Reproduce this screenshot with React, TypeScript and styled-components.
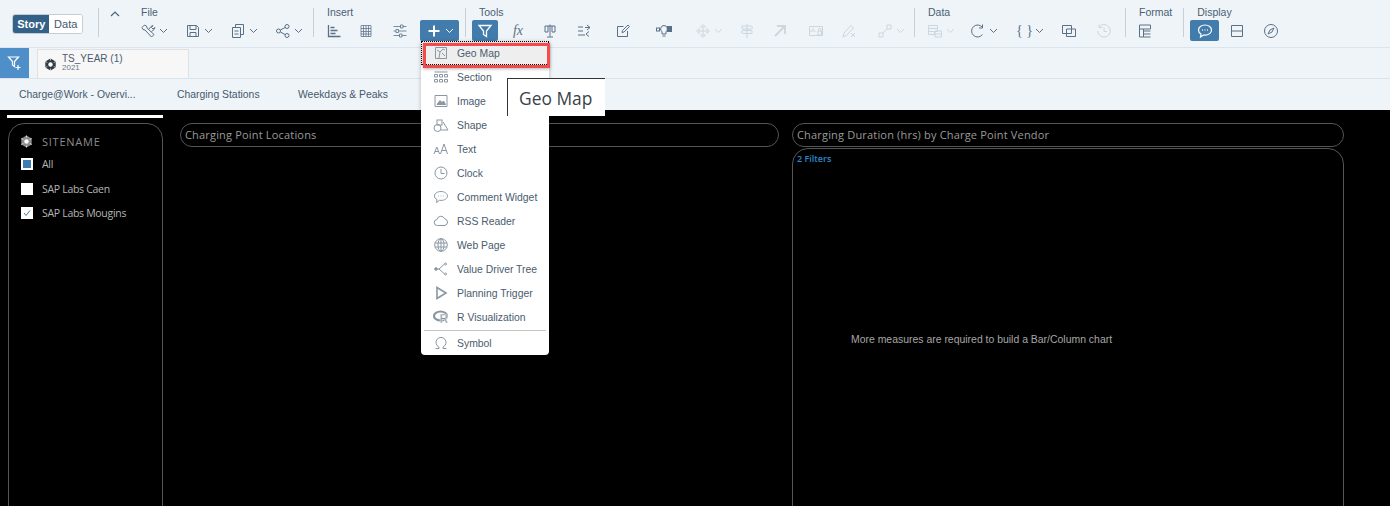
import React from "react";
import styled, { createGlobalStyle } from "styled-components";

const GlobalStyle = createGlobalStyle`
  html, body {
    margin: 0;
    padding: 0;
    height: 506px;
    overflow: hidden;
    background: #000;
    font-family: "Liberation Sans", Arial, sans-serif;
  }
  * { box-sizing: border-box; }
  svg { flex: none; }
`;

const Page = styled.div`
  position: relative;
  width: 1390px;
  height: 506px;
  overflow: hidden;
  display: flex;
  flex-direction: column;
`;

const Toolbar = styled.div`
  display: flex;
  height: 48px;
  flex: none;
  align-items: flex-start;
  padding: 8px 0 0 12px;
  background: #eff4f9;
  border-bottom: 1px solid #d9e4ef;
`;

const Switch = styled.div`
  display: flex;
  margin-top: 6px;
  width: 71px;
  height: 20px;
  border: 1px solid #c4ccd4;
  border-radius: 3px;
  overflow: hidden;
  background: #fff;
`;

const SwitchItem = styled.div<{ $active?: boolean }>`
  display: flex;
  align-items: center;
  justify-content: center;
  width: ${(p) => (p.$active ? 37 : 33)}px;
  font-size: 11px;
  font-weight: ${(p) => (p.$active ? 600 : 400)};
  color: ${(p) => (p.$active ? "#fff" : "#44586b")};
  background: ${(p) => (p.$active ? "#346187" : "#fff")};
`;

const Divider = styled.div<{ $left: number }>`
  flex: none;
  width: 1px;
  height: 29px;
  margin-left: ${(p) => p.$left}px;
  background: #c9cfd5;
`;

const Collapse = styled.div`
  width: 12px;
  height: 12px;
  margin: -1px 0 0 10px;
  color: #4e6378;
`;

const Group = styled.div<{ $left: number }>`
  flex: none;
  margin-left: ${(p) => p.$left}px;
  display: flex;
  flex-direction: column;
`;

const GroupLabel = styled.div<{ $inset: number }>`
  height: 12px;
  padding-left: ${(p) => p.$inset}px;
  font-size: 10.5px;
  line-height: 9px;
  color: #4a5f73;
  white-space: nowrap;
`;

const Tools = styled.div`
  display: flex;
  align-items: center;
  height: 21px;
`;

const ToolButton = styled.div<{ $w: number; $ml?: number; $on?: boolean; $off?: boolean }>`
  display: flex;
  align-items: center;
  justify-content: center;
  gap: 3px;
  flex: none;
  width: ${(p) => p.$w}px;
  height: 21px;
  margin-left: ${(p) => p.$ml ?? 0}px;
  border-radius: 2px;
  color: ${(p) => (p.$on ? "#fff" : p.$off ? "#ccd6df" : "#5b7085")};
  background: ${(p) => (p.$on ? "#427cac" : "transparent")};
`;

const FilterBar = styled.div`
  display: flex;
  flex: none;
  height: 31px;
  background: #eff4f9;
  border-bottom: 1px solid #d9e4ef;
`;

const AddFilter = styled.div`
  display: flex;
  align-items: center;
  justify-content: center;
  width: 29px;
  height: 30px;
  color: #fff;
  background: #4f8fc9;
`;

const Token = styled.div`
  display: flex;
  align-items: center;
  gap: 5px;
  width: 152px;
  height: 29px;
  margin: 1px 0 0 8px;
  padding-left: 6px;
  background: #f7f7f7;
  border: 1px solid #dfe2e5;
  border-bottom: none;
  color: #2f3a44;
`;

const TokenText = styled.div`
  display: flex;
  flex-direction: column;
  margin-top: -3px;
`;

const TokenName = styled.div`
  font-size: 10px;
  line-height: 11px;
  color: #4a5c6e;
`;

const TokenValue = styled.div`
  font-size: 8px;
  line-height: 8px;
  color: #6a7884;
`;

const TabBar = styled.div`
  display: flex;
  flex: none;
  height: 31px;
  align-items: center;
  padding: 0 0 1px 19px;
  background: #eff4f9;
`;

const Tab = styled.div<{ $w: number }>`
  width: ${(p) => p.$w}px;
  flex: none;
  font-size: 10.4px;
  color: #46596b;
  white-space: nowrap;
`;

const Canvas = styled.div`
  flex: 1;
  display: flex;
  align-items: flex-start;
  padding: 5px 0 0 7px;
  background: #000;
  min-height: 0;
  font-family: "Open Sans", "Liberation Sans", sans-serif;
`;

const Sidebar = styled.div`
  display: flex;
  flex-direction: column;
  flex: none;
  width: 156px;
  margin-right: 17px;
`;

const SideRule = styled.div`
  height: 3px;
  background: #fff;
`;

const SideCard = styled.div`
  height: 400px;
  margin: 5px 0 0 1px;
  padding: 8px 0 0 11px;
  border: 1px solid #555;
  border-radius: 16px 16px 0 0;
`;

const SideTitle = styled.div`
  display: flex;
  align-items: center;
  gap: 9px;
  height: 19px;
  font-size: 11px;
  color: #8c8c8c;
  letter-spacing: 0.75px;
`;

const CheckRow = styled.div<{ $h: number }>`
  display: flex;
  align-items: center;
  gap: 9px;
  height: ${(p) => p.$h}px;
  padding-left: 1px;
  font-size: 10.5px;
  letter-spacing: -0.3px;
  color: #b5b5b5;
`;

const Check = styled.div`
  display: flex;
  align-items: center;
  justify-content: center;
  width: 12px;
  height: 12px;
  background: #fff;
`;

const CheckFill = styled.div`
  width: 8px;
  height: 8px;
  background: #3f7cb0;
`;

const ChartColumn = styled.div<{ $w: number }>`
  display: flex;
  flex-direction: column;
  flex: none;
  width: ${(p) => p.$w}px;
  margin-right: 13px;
  padding-top: 8px;
`;

const TitlePill = styled.div`
  display: flex;
  align-items: center;
  height: 24px;
  padding: 0 0 2px 4px;
  font-size: 11px;
  letter-spacing: 0.18px;
  color: #9a9a9a;
  border: 1px solid #555;
  border-radius: 12px;
`;

const ChartBody = styled.div`
  display: flex;
  flex-direction: column;
  height: 400px;
  margin-top: 1px;
  padding: 4px 0 0 4px;
  border: 1px solid #555;
  border-radius: 16px 16px 0 0;
`;

const FilterCount = styled.div`
  font-size: 9px;
  line-height: 12px;
  font-weight: 600;
  color: #2b87c8;
`;

const ChartMessage = styled.div`
  margin: 169px 0 0 54px;
  font-family: "Liberation Sans", sans-serif;
  font-size: 10.45px;
  color: #a6a6a6;
`;

const Menu = styled.div`
  position: absolute;
  left: 421px;
  top: 41px;
  width: 128px;
  height: 314px;
  background: #fff;
  border-radius: 0 0 4px 4px;
  box-shadow: 0 1px 4px rgba(0, 0, 0, 0.25);
  display: flex;
  flex-direction: column;
`;

const MenuItem = styled.div<{ $selected?: boolean }>`
  display: flex;
  align-items: center;
  flex: none;
  height: 24px;
  padding-left: ${(p) => (p.$selected ? 11 : 12)}px;
  gap: 8px;
  font-size: 10.4px;
  color: #4a5c6e;
  white-space: nowrap;
  background: ${(p) => (p.$selected ? "#eeeeee" : "transparent")};
  border: ${(p) => (p.$selected ? "1px dotted #000" : "none")};
`;

const MenuIcon = styled.span`
  display: flex;
  width: 16px;
  height: 16px;
  flex: none;
  color: #8a97a3;
`;

const MenuRule = styled.div`
  flex: none;
  height: 1px;
  margin: 1px 3px 0;
  background: #c6c6c6;
`;

const Highlight = styled.div`
  position: absolute;
  left: 423px;
  top: 43px;
  width: 127px;
  height: 25px;
  border: 3px solid #f54a4a;
  box-shadow: 0 1px 3px rgba(0, 0, 0, 0.3);
`;

const Tip = styled.div`
  position: absolute;
  left: 507px;
  top: 78px;
  width: 98px;
  height: 38px;
  padding-left: 11px;
  display: flex;
  align-items: center;
  font-family: "Open Sans", sans-serif;
  font-size: 17.4px;
  color: #39424b;
  background: #fff;
  border-top: 1px solid #333;
  border-left: 1px solid #333;
`;

const GlyphText = styled.span<{ $wide?: boolean }>`
  font-family: "Liberation Serif", serif;
  font-style: ${(p) => (p.$wide ? "normal" : "italic")};
  font-size: 14px;
  line-height: 16px;
  white-space: nowrap;
  width: 16px;
  text-align: center;
`;

type IconProps = { size?: number; children: React.ReactNode };

const Svg = ({ size = 16, children }: IconProps) => (
  <svg
    width={size}
    height={size}
    viewBox="0 0 16 16"
    fill="none"
    stroke="currentColor"
    strokeWidth="1"
  >
    {children}
  </svg>
);

const icons: Record<string, React.ReactNode> = {
  wrench: (
    <>
      <path d="M2 4.500l2.500-2.500 2 1 0.500 2 7 6.500-2.500 2.500-6.500-7-2-0.500z" />
      <path d="M9 6l2-2.500 2-1-1.500 2 1.500 1.500 2-1.500-1 2-2.500 2" />
    </>
  ),
  save: <path d="M2.500 2.500h9l2 2v9h-11zM5 2.500v4h6v-4M5 13.500v-4h6v4" />,
  copy: <path d="M5.500 4.500v-3h8v10h-3M2.500 4.500h8v10h-8zM4.500 8h4M4.500 11h4" />,
  share: (
    <>
      <circle cx="3.500" cy="8" r="2" />
      <circle cx="12" cy="3.500" r="2" />
      <circle cx="12" cy="12.500" r="2" />
      <path d="M5.300 7l5-2.600M5.300 9l5 2.600" />
    </>
  ),
  bars: <path d="M2.500 2v11.500h12M4.500 4.500h4M4.500 7.500h7M4.500 10.500h5" strokeWidth="1.300" />,
  table: (
    <path
      d="M3 2.500h10v11h-10zM3 5.500h10M3 8.500h10M3 11h10M5.500 2.500v11M8 2.500v11M10.500 2.500v11"
      opacity="0.75"
    />
  ),
  sliders: (
    <path
      d="M1.500 3.500h7M11 3.500h3.500M8.500 2h2.500v3h-2.500zM1.500 8h2.500M6.500 8h8M4 6.500h2.500v3h-2.500zM1.500 12.500h6M10 12.500h4.500M7.500 11h2.500v3h-2.500z"
      opacity="0.8"
    />
  ),
  plus: <path d="M8 2.500v11M2.500 8h11" strokeWidth="2" />,
  filter: <path d="M2 2.500h12l-4.500 5.500v5.500l-3-2v-3.500z" strokeWidth="1.300" />,
  balance: <path d="M8 1.500v12M5 14h6M3 3h10M3 3v6h3v-6M13 3v6h-3v-6" />,
  sort: <path d="M2 4h5M2 8h5M2 12h7M11 2l3 2.500-3 2.500M9 4.500h5M13 8.500l-3 2.500 3 2.500" />,
  note: <path d="M12.500 8v5.500h-10v-10h6M7 9.500l0.500-2 5.500-5.500 1.500 1.500-5.500 5.500z" />,
  bulb: (
    <>
      <path d="M8 2.500a3.500 3.500 0 0 0-2 6.300v2.200h4v-2.200a3.500 3.500 0 0 0-2-6.300zM6.500 13h3" />
      <rect x="0.500" y="5" width="3" height="3" />
      <rect x="11.500" y="3.500" width="4" height="5" fill="currentColor" />
    </>
  ),
  move: <path d="M8 1.500l2.500 2.500h-5zM8 14.500l-2.500-2.500h5zM1.500 8l2.500-2.500v5zM14.500 8l-2.500-2.500v5zM8 4v8M4 8h8" />,
  sign: <path d="M8 1v14M3 3h9l2 1.500-2 1.500h-9zM13 7.500h-9l-2 1.500 2 1.500h9z" />,
  arrow: <path d="M3 13l9-9M5 3h8v8" strokeWidth="1.800" />,
  lock: <path d="M1.500 3.500h13v9h-13zM1.500 8h6M4 6h2M10 8h3.500v4h-3.500zM10.500 8v-1.500a1.200 1.200 0 0 1 2.500 0v1.500" />,
  penx: <path d="M2 14l1-4 7-7.500 2.500 2.500-7 7.500zM10 10l4 4M14 10l-4 4" />,
  link: <path d="M2 10h4v4h-4zM10 2h4v4h-4zM6 10l4-4" />,
  datasrc: <path d="M1.500 2.500h9v3h-9zM1.500 5.500h9v3h-9zM1.500 8.500h6v3h-6zM8 8h6.500v6h-6.500zM8 11h6.500" />,
  refresh: <path d="M12.500 4.500a6 6 0 1 0 0 7M12.500 1.500v3.500h-3.500" />,
  frames: <path d="M1.500 2.500h9v8h-9zM5.500 6h9v7.500h-9z" />,
  history: <path d="M3 4a6.300 6.300 0 1 1-1.300 4M3 1.500v3h3M8 4.500v4h3" />,
  layout: <path d="M2.500 2h11v4h-11zM2.500 6v8h4v-8M6.500 8h7M6.500 11h7M6.500 14h7" />,
  comment: (
    <>
      <path
        d="M8 2c-3.800 0-6.500 2.200-6.500 5 0 1.700 1 3.100 2.500 4l-0.500 3 3-2c0.500 0 1 0.100 1.500 0.100 3.800 0 6.500-2.300 6.500-5.100s-2.700-5-6.500-5z"
        strokeWidth="1.200"
      />
      <path d="M5 7h0.800M7.600 7h0.800M10.200 7h0.800" strokeWidth="1.400" />
    </>
  ),
  split: <path d="M2.500 2.500h11v11h-11zM2.500 8h11" />,
  compass: (
    <>
      <circle cx="8" cy="8" r="6.500" />
      <path d="M11 5l-4 2-2 4 4-2z" />
    </>
  ),
  geomap: <path d="M2.500 2.500h11v11h-11zM4 5l3 2 3-3 2 1M6 13l1-6M9 8l3 3" />,
  section: <path d="M1.500 3h13M1.500 5.500h3v2.500h-3zM6.500 5.500h3v2.500h-3zM11.500 5.500h3v2.500h-3zM1.500 10.500h3v2.500h-3zM6.500 10.500h3v2.500h-3zM11.500 10.500h3v2.500h-3z" />,
  image: (
    <>
      <path d="M2 2.500h12v11h-12z" />
      <path d="M4 11.500l3-4 2 2 1.500-1.500 2 3.500z" fill="currentColor" />
    </>
  ),
  shape: (
    <>
      <circle cx="4.500" cy="11" r="3.500" />
      <rect x="4" y="3" width="5" height="5" />
      <path d="M10 5l5 8h-7" />
    </>
  ),
  text: <path d="M1 13l2.800-7 2.800 7M2 10.500h3.600M7.500 13l3.500-10 3.500 10M8.800 9.500h4.400" />,
  clock: (
    <>
      <circle cx="8" cy="8" r="6" />
      <path d="M8 4v4.500h3.500" />
    </>
  ),
  bubble: <path d="M8 2.500c-3.600 0-6.500 1.900-6.500 4.500 0 1.500 1 2.800 2.500 3.600l-0.500 3 3-2.300 1.500 0.100c3.600 0 6.500-2 6.500-4.400s-2.900-4.500-6.500-4.500zM5 7h0.700M7.700 7h0.700M10.400 7h0.700" />,
  cloud: <path d="M4.500 12.500a3 3 0 0 1-0.500-6 4 4 0 0 1 7.600-0.800 3.500 3.500 0 0 1 0.400 6.800z" />,
  globe: (
    <>
      <circle cx="8" cy="8" r="6.300" />
      <ellipse cx="8" cy="8" rx="3" ry="6.300" />
      <path d="M2 6h12M2 10h12M8 1.700v12.600" />
    </>
  ),
  tree: (
    <>
      <circle cx="3" cy="8" r="1.300" fill="currentColor" />
      <path d="M4 8h2l5-4.500M6 8l5 4.500" />
      <circle cx="12.500" cy="3" r="1" />
      <circle cx="12.500" cy="13" r="1" />
    </>
  ),
  play: <path d="M4 2.500l9 5.500-9 5.500z" strokeWidth="1.600" />,
  rlogo: (
    <>
      <ellipse cx="7.500" cy="7" rx="6.500" ry="4.500" strokeWidth="2.200" />
      <text
        x="6.500"
        y="14"
        fontSize="12"
        fontWeight="700"
        fontFamily="Liberation Sans"
        fill="currentColor"
        stroke="#fff"
        strokeWidth="0.400"
      >
        R
      </text>
    </>
  ),
  omega: <path d="M2.500 13.500h3.500v-1.500a5 5 0 1 1 4 0v1.500h3.500" />,
};

const Chevron = () => (
  <svg width="9" height="9" viewBox="0 0 9 9" fill="none" stroke="currentColor">
    <path d="M1 3l3.500 3.500 3.500-3.500" />
  </svg>
);

const Hexagon = () => (
  <svg width="13" height="13" viewBox="0 0 13 13" fill="currentColor">
    <path d="M6.500 0.500l5.200 3v6l-5.200 3-5.200-3v-6z" />
    <circle cx="6.500" cy="6.500" r="2.200" fill="#fff" />
    <path
      d="M6.500 0.500v2M1.300 3.500l2 1M11.700 3.500l-2 1M1.300 9.500l2-1M11.700 9.500l-2-1M6.500 12.500v-2"
      stroke="#fff"
      strokeWidth="0.700"
    />
  </svg>
);

type ToolSpec = {
  icon?: string;
  glyph?: string;
  w: number;
  ml?: number;
  chevron?: boolean;
  on?: boolean;
  off?: boolean;
};

const Tool = ({ icon, glyph, w, ml, chevron, on, off }: ToolSpec) => (
  <ToolButton $w={w} $ml={ml} $on={on} $off={off}>
    {icon && <Svg>{icons[icon]}</Svg>}
    {glyph && <GlyphText $wide={glyph.length > 2}>{glyph}</GlyphText>}
    {chevron && <Chevron />}
  </ToolButton>
);

const fileTools: ToolSpec[] = [
  { icon: "wrench", w: 45, chevron: true },
  { icon: "save", w: 45, chevron: true },
  { icon: "copy", w: 45, chevron: true },
  { icon: "share", w: 46, chevron: true },
];

const insertTools: ToolSpec[] = [
  { icon: "bars", w: 32 },
  { icon: "table", w: 32 },
  { icon: "sliders", w: 36 },
];

const toolsTools: ToolSpec[] = [
  { icon: "filter", w: 26, on: true },
  { glyph: "fx", w: 40 },
  { icon: "balance", w: 24 },
  { icon: "sort", w: 44 },
  { icon: "note", w: 34 },
  { icon: "bulb", w: 48 },
  { icon: "move", w: 28, ml: 7, chevron: true, off: true },
  { icon: "sign", w: 34, ml: 7, off: true },
  { icon: "arrow", w: 32, off: true },
  { icon: "lock", w: 40, off: true },
  { icon: "penx", w: 26, off: true },
  { icon: "link", w: 28, ml: 15, chevron: true, off: true },
];

const dataTools: ToolSpec[] = [
  { icon: "datasrc", w: 28, chevron: true, off: true },
  { icon: "refresh", w: 28, ml: 15, chevron: true },
  { glyph: "{ }", w: 28, ml: 18, chevron: true },
  { icon: "frames", w: 16, ml: 17 },
  { icon: "history", w: 16, ml: 19, off: true },
];

const menuItems = [
  ["geomap", "Geo Map"],
  ["section", "Section"],
  ["image", "Image"],
  ["shape", "Shape"],
  ["text", "Text"],
  ["clock", "Clock"],
  ["bubble", "Comment Widget"],
  ["cloud", "RSS Reader"],
  ["globe", "Web Page"],
  ["tree", "Value Driver Tree"],
  ["play", "Planning Trigger"],
  ["rlogo", "R Visualization"],
];

const App = () => {
  return (
    <Page>
      <GlobalStyle />
      <Toolbar>
        <Switch>
          <SwitchItem $active>Story</SwitchItem>
          <SwitchItem>Data</SwitchItem>
        </Switch>
        <Divider $left={15} />
        <Collapse>
          <svg width="12" height="12" viewBox="0 0 12 12" fill="none" stroke="currentColor" strokeWidth="1.200">
            <path d="M2 7l4-4 4 4" />
          </svg>
        </Collapse>
        <Group $left={10}>
          <GroupLabel $inset={10}>File</GroupLabel>
          <Tools>
            {fileTools.map((t) => (
              <Tool key={t.icon} {...t} />
            ))}
          </Tools>
        </Group>
        <Divider $left={1} />
        <Group $left={4}>
          <GroupLabel $inset={9}>Insert</GroupLabel>
          <Tools>
            {insertTools.map((t) => (
              <Tool key={t.icon} {...t} />
            ))}
            <ToolButton $w={39} $ml={2} $on>
              <Svg>{icons.plus}</Svg>
              <Chevron />
            </ToolButton>
          </Tools>
        </Group>
        <Divider $left={6} />
        <Group $left={6}>
          <GroupLabel $inset={7}>Tools</GroupLabel>
          <Tools>
            {toolsTools.map((t) => (
              <Tool key={t.icon ?? t.glyph} {...t} />
            ))}
          </Tools>
        </Group>
        <Divider $left={9} />
        <Group $left={12}>
          <GroupLabel $inset={1}>Data</GroupLabel>
          <Tools>
            {dataTools.map((t) => (
              <Tool key={t.icon ?? t.glyph} {...t} />
            ))}
          </Tools>
        </Group>
        <Divider $left={13} />
        <Group $left={13}>
          <GroupLabel $inset={0}>Format</GroupLabel>
          <Tools>
            <Tool icon="layout" w={11} />
          </Tools>
        </Group>
        <Divider $left={11} />
        <Group $left={6}>
          <GroupLabel $inset={7}>Display</GroupLabel>
          <Tools>
            <Tool icon="comment" w={29} on />
            <Tool icon="split" w={36} />
            <Tool icon="compass" w={32} />
          </Tools>
        </Group>
      </Toolbar>

      <FilterBar>
        <AddFilter>
          <Svg>
            <path d="M1.500 2h10l-4 4.500v5l-2-1.500v-3.500zM11 10v5M8.500 12.500h5" strokeWidth="1.200" />
          </Svg>
        </AddFilter>
        <Token>
          <Hexagon />
          <TokenText>
            <TokenName>TS_YEAR (1)</TokenName>
            <TokenValue>2021</TokenValue>
          </TokenText>
        </Token>
      </FilterBar>

      <TabBar>
        <Tab $w={158}>Charge@Work - Overvi...</Tab>
        <Tab $w={121}>Charging Stations</Tab>
        <Tab $w={120}>Weekdays &amp; Peaks</Tab>
      </TabBar>

      <Canvas>
        <Sidebar>
          <SideRule />
          <SideCard>
            <SideTitle>
              <Hexagon />
              SITENAME
            </SideTitle>
            <CheckRow $h={26}>
              <Check>
                <CheckFill />
              </Check>
              All
            </CheckRow>
            <CheckRow $h={24}>
              <Check />
              SAP Labs Caen
            </CheckRow>
            <CheckRow $h={24}>
              <Check>
                <svg width="10" height="10" viewBox="0 0 10 10" fill="none" stroke="#3f7cb0">
                  <path d="M2 5l2 2.500 4-5" />
                </svg>
              </Check>
              SAP Labs Mougins
            </CheckRow>
          </SideCard>
        </Sidebar>
        <ChartColumn $w={599}>
          <TitlePill>Charging Point Locations</TitlePill>
        </ChartColumn>
        <ChartColumn $w={552}>
          <TitlePill>Charging Duration (hrs) by Charge Point Vendor</TitlePill>
          <ChartBody>
            <FilterCount>2 Filters</FilterCount>
            <ChartMessage>More measures are required to build a Bar/Column chart</ChartMessage>
          </ChartBody>
        </ChartColumn>
      </Canvas>

      <Menu>
        {menuItems.map(([icon, label], i) => (
          <MenuItem key={label} $selected={i === 0}>
            <MenuIcon>
              <Svg>{icons[icon]}</Svg>
            </MenuIcon>
            {label}
          </MenuItem>
        ))}
        <MenuRule />
        <MenuItem>
          <MenuIcon>
            <Svg>{icons.omega}</Svg>
          </MenuIcon>
          Symbol
        </MenuItem>
      </Menu>
      <Highlight />
      <Tip>Geo Map</Tip>
    </Page>
  );
};

export default App;
